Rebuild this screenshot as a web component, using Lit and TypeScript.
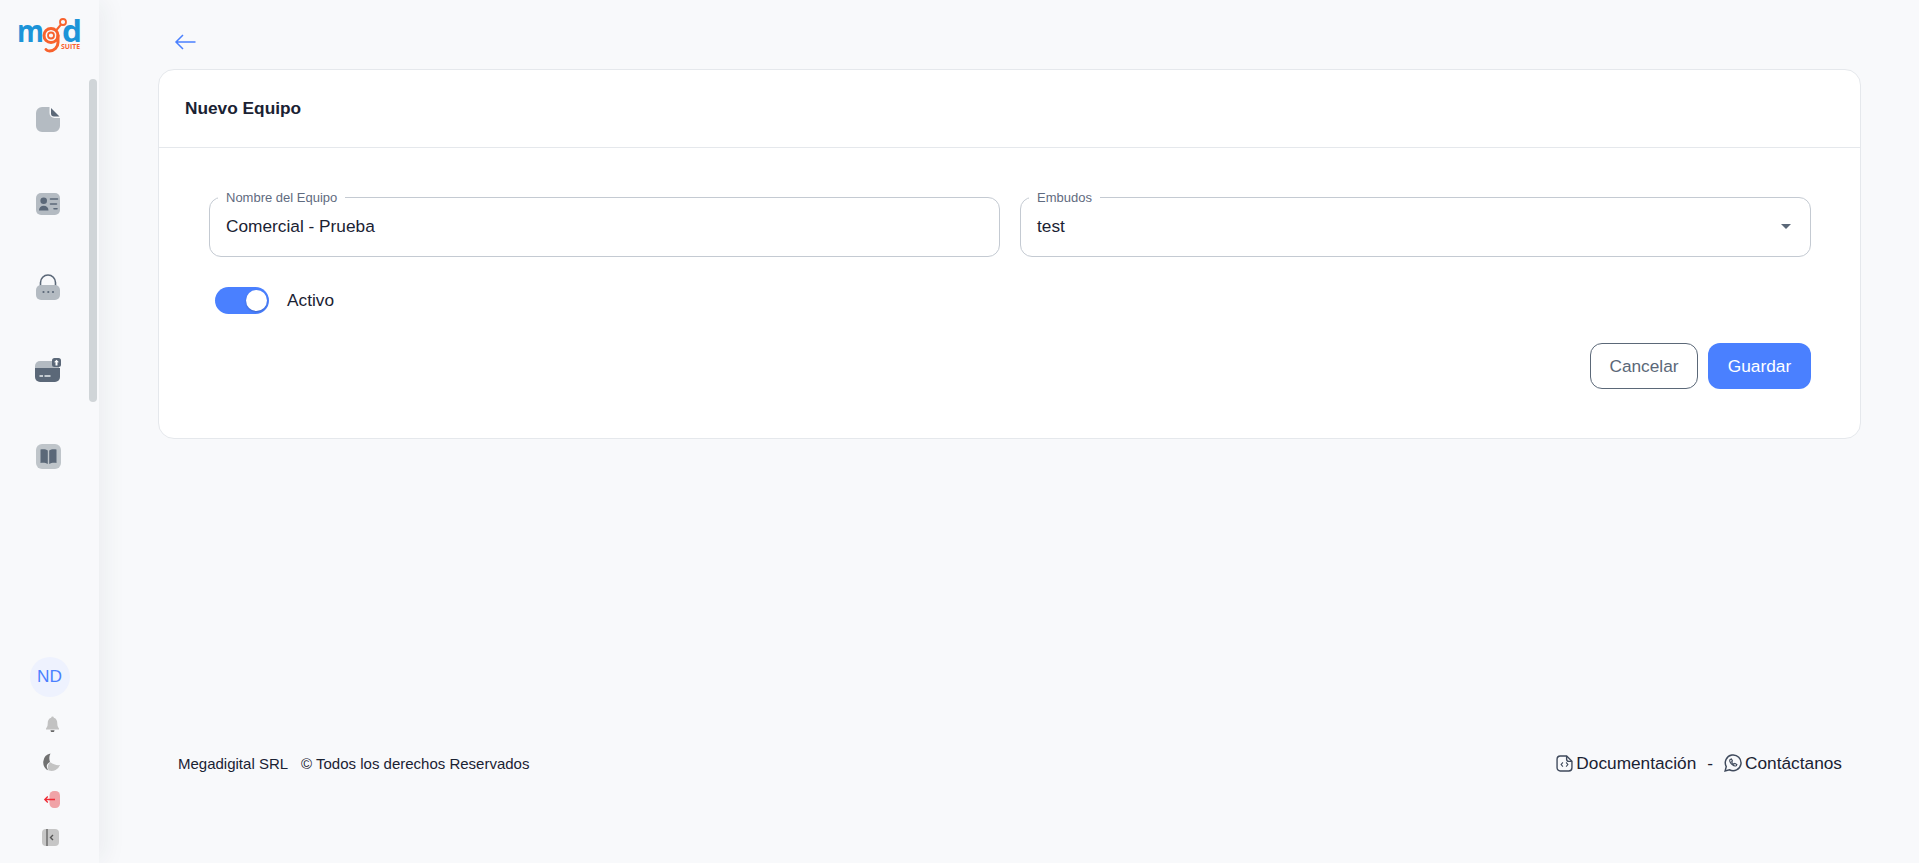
import { LitElement, html, css, svg } from "lit";
import { customElement } from "lit/decorators.js";

const D = "#5b6878";
const L = "#b4bbc2";

const docIcon = svg`<path d="M6 0h7.500v6a5 5 0 0 0 5 5H24V19a6 6 0 0 1-6 6H6a6 6 0 0 1-6-6V6a6 6 0 0 1 6-6Z" fill="${L}"/><path d="M15 1 23.500 9.500H18a3 3 0 0 1-3-3Z" fill="${D}"/>`;
const contactIcon = svg`<rect width="24" height="22" rx="5" fill="${L}"/><circle cx="7.7" cy="7.8" r="3.3" fill="${D}"/><path d="M3 17.5c0-3.2 2-4.8 4.7-4.8s4.8 1.6 4.8 4.8Z" fill="${D}"/><path d="M14.5 6h7M14.5 11h6M18 15.7h3" stroke="${D}" stroke-width="1.6" stroke-linecap="round"/>`;
const lockIcon = svg`<path d="M4.5 12V8.5a7.5 7.5 0 0 1 15 0V12" fill="none" stroke="${D}" stroke-width="1.6"/><rect y="11" width="24" height="15" rx="5" fill="${L}"/><circle cx="7.5" cy="18" r="1.1" fill="${D}"/><circle cx="12.3" cy="18" r="1.1" fill="${D}"/><circle cx="17" cy="18" r="1.1" fill="${D}"/>`;
const cardIcon = svg`<path d="M5 3h19v7H0V8a5 5 0 0 1 5-5Z" fill="${L}"/><path d="M0 10h25v9a5 5 0 0 1-5 5H5a5 5 0 0 1-5-5Z" fill="${D}"/><path d="M4.5 18h3.5M9.5 18h6" stroke="#e8ebee" stroke-width="1.5"/><rect x="17" y="0" width="9" height="9" rx="2.5" fill="${D}"/><path d="M21.5 1.8 24 4.3h-1.500V7.500h-2V4.300H19Z" fill="#fff"/>`;
const bookIcon = svg`<rect width="25" height="25" rx="6" fill="#bfc5ca"/><path d="M4.5 5.5c3-.6 5.800-.2 7.300 1v13.500c-2-1.200-4.600-1.500-7.300-1Z" fill="${D}"/><path d="M20.500 5.500c-3-.6-5.800-.2-7.300 1v13.500c2-1.200 4.600-1.500 7.300-1Z" fill="${D}"/>`;
const bellIcon = svg`<path d="M6.500.5a1.300 1.300 0 0 1 1.300 1.300C10.500 2.500 11.300 5 11.300 7.500c0 2.500.7 3.500 1.700 5v1H0v-1c1-1.500 1.700-2.500 1.700-5 0-2.500.8-5 3.500-5.700A1.300 1.300 0 0 1 6.500.5Z" fill="#c2c2c2"/><path d="M4.500 14.300h4a2 2 0 0 1-4 0Z" fill="#666"/>`;
const moonIcon = svg`<path d="M8.500 0.500A9 9 0 0 0 6.500 17.500C4 14 4 11 8 9 7 6 7 3 8.500.5Z" fill="#717171"/><path d="M8.500 9.300C11 11.500 15 12.500 18 12a9 9 0 0 1-11 5.600C5 15 5.500 11.500 8.500 9.300Z" fill="#c4c4c4"/>`;
const logoutIcon = svg`<rect x="6.500" width="10.500" height="17" rx="4.500" fill="#f0a3a7"/><path d="M1.500 8.500h10.500M4.800 5.500l-3 3 3 3" fill="none" stroke="#ef2b36" stroke-width="1.300"/>`;
const collapseIcon = svg`<rect width="17" height="17" rx="4" fill="#c6c6c6"/><path d="M5 0v17" stroke="#555" stroke-width="1.200"/><path d="M11 6 8.500 8.500 11 11" fill="none" stroke="#555" stroke-width="1.400"/>`;

@customElement("app-root")
export class AppRoot extends LitElement {
  static styles = css`
    :host {
      display: flex;
      height: 863px;
      overflow: hidden;
      background: #f8f9fb;
      color: #1a2233;
      font-family: "Liberation Sans", Arial, sans-serif;
    }
    svg { display: block; flex: none; }
    .side {
      flex: none;
      box-sizing: border-box;
      width: 99px;
      height: 863px;
      position: relative;
      background: #f8f9fb;
      display: flex;
      flex-direction: column;
      align-items: center;
      box-shadow: 8px 0 22px -2px rgba(40, 50, 70, 0.06);
    }
    .logo { margin: 16px 0 0 0; overflow: visible; }
    .logo text { font-family: "Open Sans", sans-serif; }
    .nav {
      display: flex;
      flex-direction: column;
      align-items: center;
      width: 48px;
      margin: 53px 3px 0 0;
    }
    .nav svg:nth-child(2) { margin-top: 61px; }
    .nav svg:nth-child(3) { margin-top: 59px; }
    .nav svg:nth-child(4) { margin-top: 58px; }
    .nav svg:nth-child(5) { margin-top: 62px; }
    .scroll {
      position: absolute;
      left: 89px;
      top: 79px;
      width: 8px;
      height: 323px;
      border-radius: 4px;
      background: #d0d5d8;
    }
    .bottom {
      margin-top: auto;
      padding-bottom: 17px;
      display: flex;
      flex-direction: column;
      align-items: center;
    }
    .avatar {
      width: 40px;
      height: 40px;
      border-radius: 50%;
      background: #eef2fe;
      color: #4a80ff;
      font-size: 17.28px;
      display: flex;
      align-items: center;
      justify-content: center;
      margin-bottom: 19px;
    }
    .b-bell { margin-left: 5px; }
    .b-moon { margin-top: 21px; margin-left: 3px; }
    .b-out { margin-top: 20px; margin-left: 3px; }
    .b-col { margin-top: 21px; margin-left: 1px; }

    .main {
      flex: 1;
      min-width: 0;
      box-sizing: border-box;
      height: 863px;
      padding: 0 58px 0 59px;
      display: flex;
      flex-direction: column;
    }
    .back { height: 69px; box-sizing: border-box; padding: 30px 0 0 15px; }
    .card {
      background: #fff;
      border: 1px solid #e5e8ec;
      border-radius: 16px;
      height: 370px;
      box-sizing: border-box;
    }
    .card-head {
      height: 78px;
      box-sizing: border-box;
      border-bottom: 1px solid #e5e8ec;
      padding-left: 26px;
      display: flex;
      align-items: center;
      font-size: 17.28px;
      font-weight: 700;
      color: #1a2233;
    }
    .card-body { padding: 42px 40px 0 50px; }
    .fields {
      display: grid;
      grid-template-columns: 791px 791px;
      gap: 20px;
    }
    fieldset {
      margin: 0;
      min-width: 0;
      height: 67px;
      box-sizing: border-box;
      padding: 0 16px;
      border: 1px solid #c4cad2;
      border-radius: 12px;
      display: flex;
      align-items: center;
      justify-content: space-between;
      font-size: 17.28px;
      color: #1a2233;
    }
    legend {
      padding: 0 8px;
      margin-left: -8px;
      font-size: 13px;
      line-height: 15px;
      color: #5f6b80;
    }
    .value { margin-top: -8px; }
    .caret {
      width: 0;
      height: 0;
      margin: -8px 3px 0 0;
      border-left: 5px solid transparent;
      border-right: 5px solid transparent;
      border-top: 5px solid #5b6878;
    }
    .toggle-row {
      display: flex;
      align-items: center;
      gap: 18px;
      margin: 30px 0 0 6px;
      height: 27px;
      font-size: 17.28px;
    }
    .toggle {
      width: 54px;
      height: 27px;
      box-sizing: border-box;
      border-radius: 14px;
      background: #4a80ff;
      padding: 3px 3px 3px 31px;
    }
    .knob {
      width: 21px;
      height: 21px;
      border-radius: 50%;
      background: #fff;
      box-shadow: 0 1px 2px rgba(30, 40, 80, 0.3);
    }
    .actions {
      display: flex;
      justify-content: flex-end;
      gap: 10px;
      margin: 29px 0 0 0;
      width: 1602px;
    }
    button {
      height: 46px;
      box-sizing: border-box;
      border-radius: 12px;
      font: 17.28px "Liberation Sans", Arial, sans-serif;
    }
    .cancel {
      width: 108px;
      background: #fff;
      border: 1px solid #5b6878;
      color: #5b6878;
    }
    .save {
      width: 103px;
      background: #4a80ff;
      border: 0;
      color: #fff;
    }
    .footer {
      margin-top: auto;
      padding: 0 19px 90px 20px;
      display: flex;
      justify-content: space-between;
      align-items: center;
      height: 20px;
      font-size: 15px;
      color: #1a2233;
    }
    .copy { display: flex; gap: 13px; }
    .links { display: flex; align-items: center; font-size: 17.28px; }
    .links svg { margin-right: 3px; }
    .sep { margin: 0 11px; }
  `;

  render() {
    return html`
      <aside class="side">
        <svg class="logo" width="66" height="38" viewBox="0 0 66 38">
          <text x="0" y="26" font-size="31" font-weight="700" fill="#1c94d8" textLength="27" lengthAdjust="spacingAndGlyphs">m</text>
          <text x="45" y="26" font-size="31" font-weight="700" fill="#1c94d8" textLength="20" lengthAdjust="spacingAndGlyphs">d</text>
          <circle cx="34" cy="19.500" r="7" fill="#f8f9fb" stroke="#f8622d" stroke-width="3"/>
          <circle cx="34" cy="19.500" r="3" fill="none" stroke="#f8622d" stroke-width="1.800"/>
          <path d="M41 19.500v7a8.500 8.500 0 0 1-8.500 8.500c-1.800 0-2.800-.5-3.500-1.500" fill="none" stroke="#f8622d" stroke-width="3" stroke-linecap="round"/>
          <path d="M39.500 14 44 8.500" stroke="#f8622d" stroke-width="2"/>
          <circle cx="46" cy="6" r="3" fill="#f8f9fb" stroke="#f8622d" stroke-width="1.800"/>
          <text x="44" y="33" font-size="6.500" font-weight="700" fill="#f8622d" textLength="19" lengthAdjust="spacingAndGlyphs">SUITE</text>
        </svg>
        <nav class="nav">
          <svg width="24" height="25" viewBox="0 0 24 25">${docIcon}</svg>
          <svg width="24" height="22" viewBox="0 0 24 22">${contactIcon}</svg>
          <svg width="24" height="26" viewBox="0 0 24 26">${lockIcon}</svg>
          <svg width="26" height="24" viewBox="0 0 26 24">${cardIcon}</svg>
          <svg width="25" height="25" viewBox="0 0 25 25">${bookIcon}</svg>
        </nav>
        <div class="scroll"></div>
        <div class="bottom">
          <div class="avatar">ND</div>
          <svg class="b-bell" width="13" height="16.500" viewBox="0 0 13 16.500">${bellIcon}</svg>
          <svg class="b-moon" width="18" height="18" viewBox="0 0 18 18">${moonIcon}</svg>
          <svg class="b-out" width="17" height="17" viewBox="0 0 17 17">${logoutIcon}</svg>
          <svg class="b-col" width="17" height="17" viewBox="0 0 17 17">${collapseIcon}</svg>
        </div>
      </aside>
      <main class="main">
        <div class="back">
          <svg width="24" height="24" viewBox="0 0 24 24" fill="none" stroke="#4a80ff" stroke-width="1.500">
            <path d="M22.500 12H3M10 5l-7 7 7 7"/>
          </svg>
        </div>
        <section class="card">
          <header class="card-head">Nuevo Equipo</header>
          <div class="card-body">
            <div class="fields">
              <fieldset>
                <legend>Nombre del Equipo</legend>
                <span class="value">Comercial - Prueba</span>
              </fieldset>
              <fieldset>
                <legend>Embudos</legend>
                <span class="value">test</span>
                <span class="caret"></span>
              </fieldset>
            </div>
            <div class="toggle-row">
              <div class="toggle"><div class="knob"></div></div>
              <span>Activo</span>
            </div>
            <div class="actions">
              <button class="cancel">Cancelar</button>
              <button class="save">Guardar</button>
            </div>
          </div>
        </section>
        <footer class="footer">
          <div class="copy"><span>Megadigital SRL</span><span>© Todos los derechos Reservados</span></div>
          <div class="links">
            <svg width="17" height="17" viewBox="0 0 16 16" fill="none" stroke="#3f4a5c" stroke-width="1.300">
              <path d="M4 1h6l5 5v6a3 3 0 0 1-3 3H4a3 3 0 0 1-3-3V4a3 3 0 0 1 3-3Z"/>
              <path d="M10 1v3a2 2 0 0 0 2 2h3" />
              <path d="M6.500 7 4.800 9l1.700 2M9.500 7l1.700 2-1.700 2" stroke-width="1"/>
            </svg>
            <span>Documentación</span>
            <span class="sep">-</span>
            <svg width="18" height="18" viewBox="0 0 16 16" fill="none" stroke="#3f4a5c" stroke-width="1.300">
              <path d="M1 15l1-3.800A7 7 0 1 1 4.800 14Z"/>
              <path d="M5.500 4.800c-1 1 0 3 1.500 4.300s3 2 4 1.200l.4-1-1.800-1-.8.700c-1-.4-1.600-1.100-2-2l.7-.8-.9-1.800Z" stroke-width="1"/>
            </svg>
            <span>Contáctanos</span>
          </div>
        </footer>
      </main>
    `;
  }
}
